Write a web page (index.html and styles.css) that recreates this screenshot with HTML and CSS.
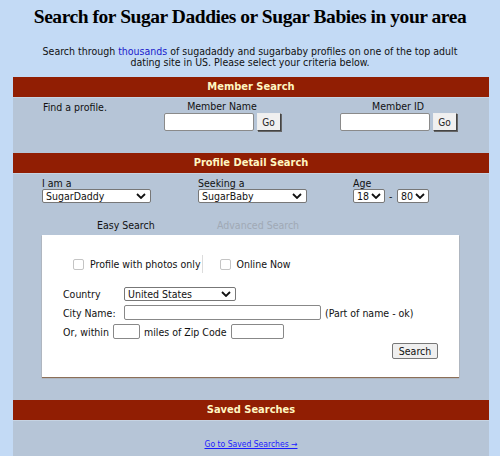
FILE: index.html
```html
<!DOCTYPE html>
<html lang="en">
<head>
<meta charset="utf-8">
<title>Search for Sugar Daddies or Sugar Babies</title>
<link rel="stylesheet" href="styles.css">
</head>
<body>
<h1 class="title">Search for Sugar Daddies or Sugar Babies in your area</h1>
<p class="intro">Search through <a href="#" class="intro-link">thousands</a> of sugadaddy and sugarbaby profiles on one of the top adult<br>dating site in US. Please select your criteria below.</p>

<div class="panel">
  <div class="bar">Member Search</div>
  <div class="member-grid">
    <div class="find">Find a profile.</div>
    <div class="member-col">
      <label class="member-label">Member Name</label>
      <div class="member-row"><input type="text" class="member-input"><button class="go">Go</button></div>
    </div>
    <div class="member-col">
      <label class="member-label">Member ID</label>
      <div class="member-row"><input type="text" class="member-input"><button class="go">Go</button></div>
    </div>
  </div>

  <div class="bar">Profile Detail Search</div>
  <div class="detail-fields">
    <div class="field">
      <label class="field-label">I am a</label>
      <select class="sel sel-wide"><option>SugarDaddy</option><option>SugarBaby</option></select>
    </div>
    <div class="field">
      <label class="field-label">Seeking a</label>
      <select class="sel sel-wide"><option>SugarBaby</option><option>SugarDaddy</option></select>
    </div>
    <div class="field">
      <label class="field-label">Age</label>
      <div class="age-row">
        <select class="sel sel-age"><option>18</option></select>
        <span class="dash">-</span>
        <select class="sel sel-age"><option>80</option></select>
      </div>
    </div>
  </div>

  <div class="tabs">
    <span class="tab tab-active">Easy Search</span>
    <span class="tab tab-muted">Advanced Search</span>
  </div>

  <div class="search-box">
    <div class="checks">
      <label class="check"><input type="checkbox" class="cb"> Profile with photos only</label>
      <span class="sep"></span>
      <label class="check"><input type="checkbox" class="cb"> Online Now</label>
    </div>
    <div class="form-rows">
      <div class="frow">
        <span class="flabel flabel-fixed">Country</span>
        <select class="sel sel-country"><option>United States</option><option>Canada</option></select>
      </div>
      <div class="frow">
        <span class="flabel flabel-fixed">City Name:</span>
        <input type="text" class="tinput city">
        <span class="flabel">(Part of name - ok)</span>
      </div>
      <div class="frow">
        <span class="flabel">Or, within</span>
        <input type="text" class="tinput miles">
        <span class="flabel">miles of Zip Code</span>
        <input type="text" class="tinput zip">
      </div>
    </div>
    <div class="actions"><button class="search-btn">Search</button></div>
  </div>

  <div class="bar bar-saved">Saved Searches</div>
  <div class="saved">
    <a href="#" class="saved-link">Go to Saved Searches &rarr;</a>
  </div>
</div>
</body>
</html>
```

FILE: styles.css
```css
* { box-sizing: border-box; }

body {
  margin: 0;
  background: #c3daf5;
  font-family: "DejaVu Sans Condensed", "DejaVu Sans", sans-serif;
  font-size: 10.5px;
  color: #111;
  height: 456px;
  overflow: hidden;
}

.title {
  margin: 0;
  padding-top: 5px;
  text-align: center;
  font-family: "Liberation Serif", "Times New Roman", serif;
  font-weight: bold;
  font-size: 19.5px;
  letter-spacing: -0.45px;
  line-height: 24px;
  color: #000;
}

.intro {
  margin: 17px 0 9px;
  text-align: center;
  line-height: 11px;
  color: #111;
}

.intro-link { color: #1a1acc; text-decoration: none; }

.panel {
  margin: 0 11px 0 13px;
  background: #b6c5d7;
  padding-bottom: 20px;
}

.bar {
  height: 21px;
  line-height: 20px;
  background: #911e03;
  border-bottom: 1px solid #c6d3e2;
  color: #fff6c2;
  font-size: 11px;
  font-weight: bold;
  text-align: center;
}

/* member lookup */
.member-grid {
  display: grid;
  grid-template-columns: 121px 176px 176px;
  height: 55px;
  padding-top: 3px;
}

.find { padding-left: 30px; }

.member-col {
  display: flex;
  flex-direction: column;
  align-items: center;
}

.member-label { line-height: 11px; height: 12px; }

.member-row { display: flex; gap: 3px; }

.member-input {
  width: 90px;
  height: 18px;
  border: 1px solid #8a8a8a;
  border-radius: 2px;
  background: #fff;
}

.go {
  width: 24px;
  height: 18px;
  padding: 0;
  font: inherit;
  font-size: 10px;
  color: #222;
  background: #f0f0f0;
  border: 1px solid #555;
  border-color: #eee #444 #444 #eee;
  box-shadow: 1px 1px 0 #666;
}

/* profile detail */
.detail-fields {
  display: flex;
  padding: 3px 0 0 29px;
  height: 46px;
}

.field { display: flex; flex-direction: column; }
.field:nth-child(1) { width: 156px; }
.field:nth-child(2) { width: 155px; }

.field-label { line-height: 12px; }

.sel {
  -webkit-appearance: none;
  appearance: none;
  height: 14px;
  padding: 0 14px 0 3px;
  font: inherit;
  line-height: 12px;
  color: #111;
  background: #fff url("data:image/svg+xml,%3Csvg xmlns='http://www.w3.org/2000/svg' width='10' height='6' viewBox='0 0 10 6'%3E%3Cpath d='M1 1l4 4 4-4' fill='none' stroke='%23111' stroke-width='1.8'/%3E%3C/svg%3E") no-repeat right 4px center;
  border: 1px solid #777;
  border-radius: 2px;
}

.sel-wide { width: 109px; }
.sel-age { width: 32px; padding-right: 12px; background-position: right 3px center; }
.sel-country { width: 112px; }

.age-row { display: flex; align-items: center; gap: 4px; }
.dash { width: 4px; }

.tabs {
  display: flex;
  height: 15px;
  line-height: 11px;
  padding-left: 84px;
}

.tab-active { width: 120px; color: #111; }
.tab-muted { color: #a0a9b5; }

.search-box {
  margin: 0 30px 0 29px;
  background: #fff;
  height: 142px;
  box-shadow: 0 1px 1px #8c6f57;
  padding-top: 20px;
}

.checks {
  display: flex;
  align-items: center;
  height: 18px;
  padding-left: 31px;
}

.check { display: flex; align-items: center; gap: 6px; }

.cb {
  appearance: none;
  -webkit-appearance: none;
  margin: 0;
  width: 11px;
  height: 11px;
  border: 1px solid #c4c4c4;
  border-radius: 2px;
  background: #fff;
}

.sep {
  width: 1px;
  height: 18px;
  background: #dcdcdc;
  margin: 0 17px 0 1px;
}

.form-rows {
  margin-top: 13px;
  padding-left: 21px;
  display: flex;
  flex-direction: column;
  gap: 4px;
}

.frow { display: flex; align-items: center; gap: 4px; height: 15px; }

.flabel-fixed { width: 57px; }

.tinput {
  height: 15px;
  border: 1px solid #888;
  border-radius: 2px;
  background: #fff;
}

.city { width: 197px; }
.miles { width: 27px; }
.zip { width: 53px; }

.actions { display: flex; justify-content: flex-end; padding: 4px 21px 0 0; }

.search-btn {
  height: 16px;
  width: 46px;
  padding: 0;
  font: inherit;
  color: #111;
  background: #efefef;
  border: 1px solid #777;
  border-radius: 2px;
}

.bar-saved { margin-top: 23px; }

.saved {
  text-align: center;
  padding-top: 16px;
  height: 35px;
}

.saved-link {
  color: #1b1bff;
  font-size: 8.5px;
  text-decoration: underline;
}
```
